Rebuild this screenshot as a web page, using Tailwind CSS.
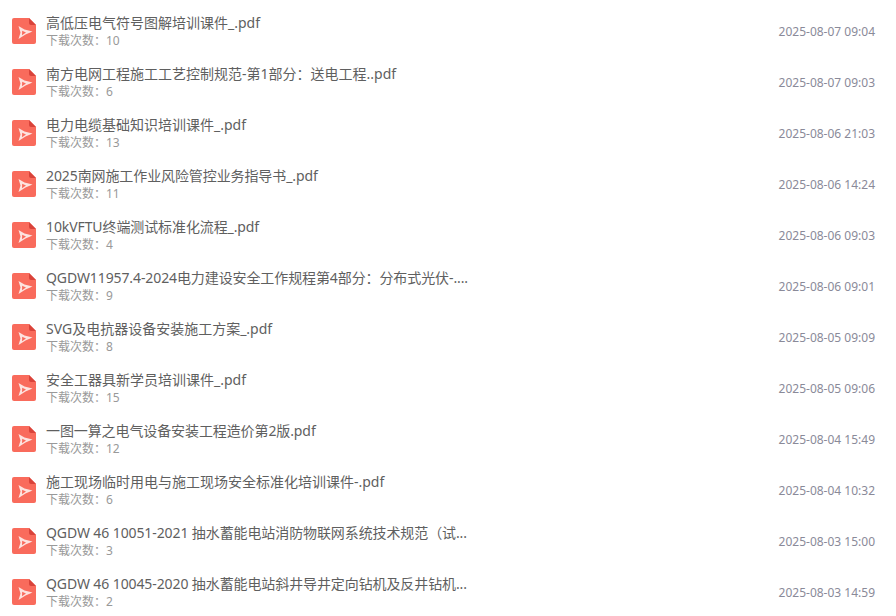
<!doctype html>
<html>
<head>
<meta charset="utf-8">
<script src="https://cdn.jsdelivr.net/npm/@tailwindcss/browser@4"></script>
</head>
<body class="bg-white overflow-hidden font-['Noto_Sans','Noto_Sans_CJK_SC',sans-serif]">
<svg class="hidden"><defs><symbol id="pdf" viewBox="0 0 24 26">
  <path d="M2 0H17L24 7V24a2 2 0 0 1-2 2H2a2 2 0 0 1-2-2V2a2 2 0 0 1 2-2Z" fill="#f96b5c"/>
  <path d="M17 0L24 7H19a2 2 0 0 1-2-2Z" fill="#d9433a"/>
  <path fill-rule="evenodd" d="M6.500 8L12.500 11.500L20.500 13.500L13.500 16.500L6.500 21L8.500 14.500ZM10.200 12.800L10 17.200L14 14.600Z" fill="#fde3df"/>
</symbol></defs></svg>
<main class="h-[616px] overflow-hidden pt-[5px]">
  <ul class="flex flex-col">
    <li class="h-[51px] flex items-center pl-3 pr-[21px]">
      <svg class="w-6 h-[26px] mr-[10px] shrink-0"><use href="#pdf"/></svg>
      <div class="flex-1 min-w-0"><p class="text-sm leading-[20px] text-[#5f5f5f]">高低压电气符号图解培训课件_.pdf</p><p class="text-xs leading-[16px] text-[#999]">下载次数：10</p></div>
      <span class="mt-[2px] text-xs text-[#8a8a99]">2025-08-07 09:04</span>
    </li>
    <li class="h-[51px] flex items-center pl-3 pr-[21px]">
      <svg class="w-6 h-[26px] mr-[10px] shrink-0"><use href="#pdf"/></svg>
      <div class="flex-1 min-w-0"><p class="text-sm leading-[20px] text-[#5f5f5f]">南方电网工程施工工艺控制规范-第1部分：送电工程..pdf</p><p class="text-xs leading-[16px] text-[#999]">下载次数：6</p></div>
      <span class="mt-[2px] text-xs text-[#8a8a99]">2025-08-07 09:03</span>
    </li>
    <li class="h-[51px] flex items-center pl-3 pr-[21px]">
      <svg class="w-6 h-[26px] mr-[10px] shrink-0"><use href="#pdf"/></svg>
      <div class="flex-1 min-w-0"><p class="text-sm leading-[20px] text-[#5f5f5f]">电力电缆基础知识培训课件_.pdf</p><p class="text-xs leading-[16px] text-[#999]">下载次数：13</p></div>
      <span class="mt-[2px] text-xs text-[#8a8a99]">2025-08-06 21:03</span>
    </li>
    <li class="h-[51px] flex items-center pl-3 pr-[21px]">
      <svg class="w-6 h-[26px] mr-[10px] shrink-0"><use href="#pdf"/></svg>
      <div class="flex-1 min-w-0"><p class="text-sm leading-[20px] tracking-[-0.1px] text-[#5f5f5f]">2025南网施工作业风险管控业务指导书_.pdf</p><p class="text-xs leading-[16px] text-[#999]">下载次数：11</p></div>
      <span class="mt-[2px] text-xs text-[#8a8a99]">2025-08-06 14:24</span>
    </li>
    <li class="h-[51px] flex items-center pl-3 pr-[21px]">
      <svg class="w-6 h-[26px] mr-[10px] shrink-0"><use href="#pdf"/></svg>
      <div class="flex-1 min-w-0"><p class="text-sm leading-[20px] tracking-[-0.1px] text-[#5f5f5f]">10kVFTU终端测试标准化流程_.pdf</p><p class="text-xs leading-[16px] text-[#999]">下载次数：4</p></div>
      <span class="mt-[2px] text-xs text-[#8a8a99]">2025-08-06 09:03</span>
    </li>
    <li class="h-[51px] flex items-center pl-3 pr-[21px]">
      <svg class="w-6 h-[26px] mr-[10px] shrink-0"><use href="#pdf"/></svg>
      <div class="flex-1 min-w-0"><p class="text-sm leading-[20px] tracking-[-0.1px] text-[#5f5f5f]">QGDW11957.4-2024电力建设安全工作规程第4部分：分布式光伏-....</p><p class="text-xs leading-[16px] text-[#999]">下载次数：9</p></div>
      <span class="mt-[2px] text-xs text-[#8a8a99]">2025-08-06 09:01</span>
    </li>
    <li class="h-[51px] flex items-center pl-3 pr-[21px]">
      <svg class="w-6 h-[26px] mr-[10px] shrink-0"><use href="#pdf"/></svg>
      <div class="flex-1 min-w-0"><p class="text-sm leading-[20px] text-[#5f5f5f]">SVG及电抗器设备安装施工方案_.pdf</p><p class="text-xs leading-[16px] text-[#999]">下载次数：8</p></div>
      <span class="mt-[2px] text-xs text-[#8a8a99]">2025-08-05 09:09</span>
    </li>
    <li class="h-[51px] flex items-center pl-3 pr-[21px]">
      <svg class="w-6 h-[26px] mr-[10px] shrink-0"><use href="#pdf"/></svg>
      <div class="flex-1 min-w-0"><p class="text-sm leading-[20px] text-[#5f5f5f]">安全工器具新学员培训课件_.pdf</p><p class="text-xs leading-[16px] text-[#999]">下载次数：15</p></div>
      <span class="mt-[2px] text-xs text-[#8a8a99]">2025-08-05 09:06</span>
    </li>
    <li class="h-[51px] flex items-center pl-3 pr-[21px]">
      <svg class="w-6 h-[26px] mr-[10px] shrink-0"><use href="#pdf"/></svg>
      <div class="flex-1 min-w-0"><p class="text-sm leading-[20px] tracking-[-0.1px] text-[#5f5f5f]">一图一算之电气设备安装工程造价第2版.pdf</p><p class="text-xs leading-[16px] text-[#999]">下载次数：12</p></div>
      <span class="mt-[2px] text-xs text-[#8a8a99]">2025-08-04 15:49</span>
    </li>
    <li class="h-[51px] flex items-center pl-3 pr-[21px]">
      <svg class="w-6 h-[26px] mr-[10px] shrink-0"><use href="#pdf"/></svg>
      <div class="flex-1 min-w-0"><p class="text-sm leading-[20px] text-[#5f5f5f]">施工现场临时用电与施工现场安全标准化培训课件-.pdf</p><p class="text-xs leading-[16px] text-[#999]">下载次数：6</p></div>
      <span class="mt-[2px] text-xs text-[#8a8a99]">2025-08-04 10:32</span>
    </li>
    <li class="h-[51px] flex items-center pl-3 pr-[21px]">
      <svg class="w-6 h-[26px] mr-[10px] shrink-0"><use href="#pdf"/></svg>
      <div class="flex-1 min-w-0"><p class="text-sm leading-[20px] tracking-[-0.1px] text-[#5f5f5f]">QGDW 46 10051-2021 抽水蓄能电站消防物联网系统技术规范（试...</p><p class="text-xs leading-[16px] text-[#999]">下载次数：3</p></div>
      <span class="mt-[2px] text-xs text-[#8a8a99]">2025-08-03 15:00</span>
    </li>
    <li class="h-[51px] flex items-center pl-3 pr-[21px]">
      <svg class="w-6 h-[26px] mr-[10px] shrink-0"><use href="#pdf"/></svg>
      <div class="flex-1 min-w-0"><p class="text-sm leading-[20px] tracking-[-0.1px] text-[#5f5f5f]">QGDW 46 10045-2020 抽水蓄能电站斜井导井定向钻机及反井钻机...</p><p class="text-xs leading-[16px] text-[#999]">下载次数：2</p></div>
      <span class="mt-[2px] text-xs text-[#8a8a99]">2025-08-03 14:59</span>
    </li>
  </ul>
</main>
</body>
</html>
